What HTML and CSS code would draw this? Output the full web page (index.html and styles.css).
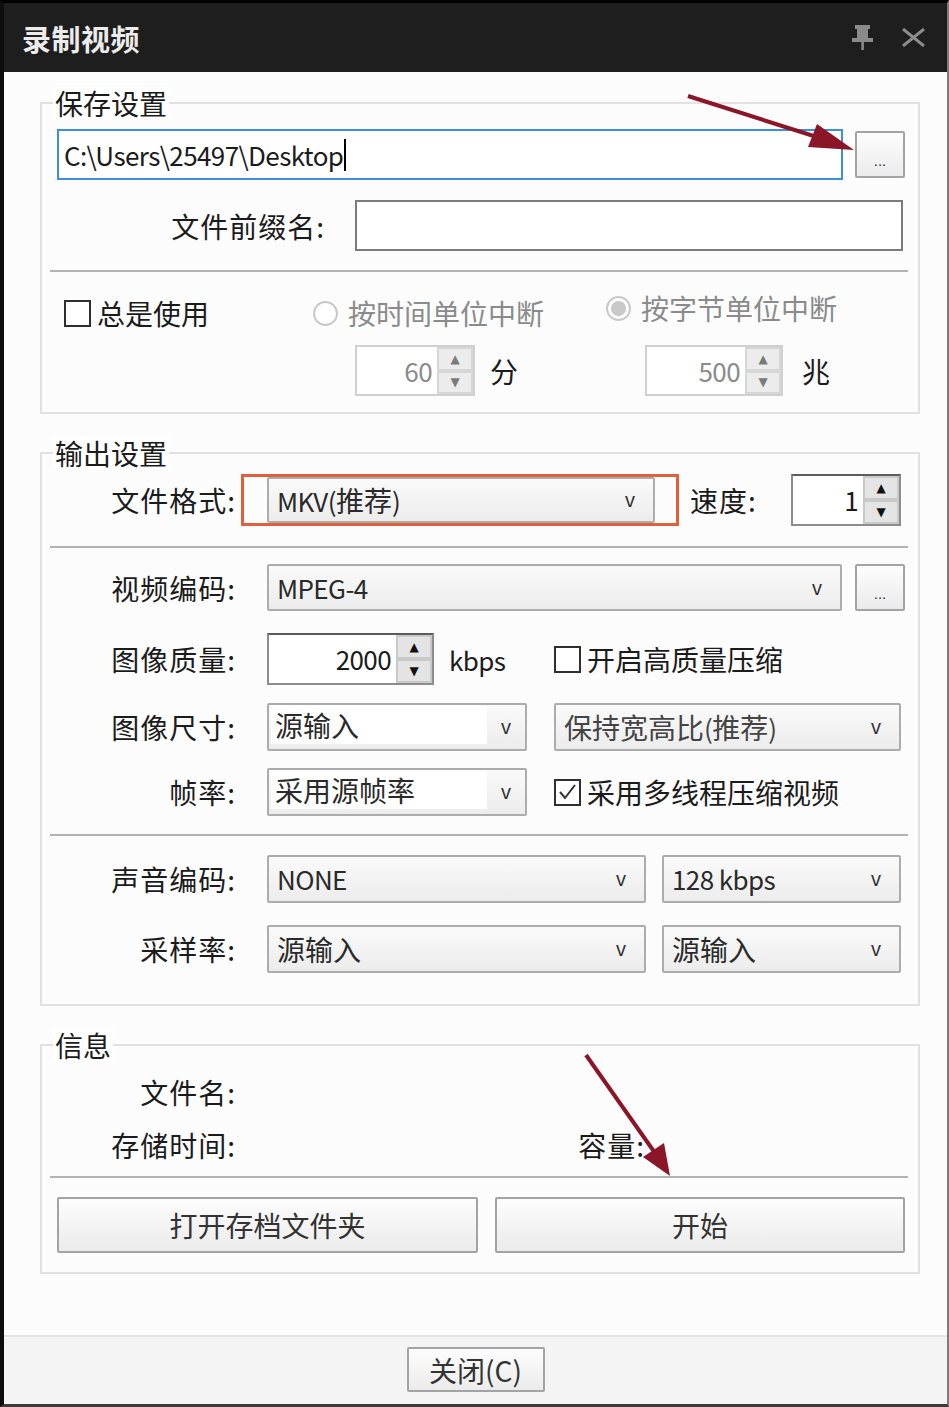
FILE: index.html
```html
<!DOCTYPE html>
<html lang="zh-CN">
<head>
    <meta charset="UTF-8">
    <title>录制视频</title>
    <link rel="stylesheet" href="styles.css">
</head>
<body>
    <div class="window">
        <div class="titlebar">
            <span class="title">录制视频</span>
            <span class="title-icons">
                <svg class="pin" width="21" height="25" viewBox="0 0 21 25">
                    <rect x="3" y="0" width="15" height="4"/>
                    <rect x="5" y="4" width="11" height="9"/>
                    <rect x="0" y="13" width="21" height="4"/>
                    <rect x="9.3" y="17" width="2.6" height="8"/>
                </svg>
                <svg class="close" width="23" height="19" viewBox="0 0 23 19">
                    <path d="M1 1 L22 18 M22 1 L1 18"/>
                </svg>
            </span>
        </div>

        <div class="content">
            <!-- save settings -->
            <fieldset class="group group-save">
                <legend>保存设置</legend>
                <div class="row row-path">
                    <div class="textbox path"><span class="latin">C:\Users\25497\Desktop</span><span class="caret"></span></div>
                    <button class="btn btn-more">...</button>
                </div>
                <div class="row row-prefix">
                    <span class="label label-prefix">文件前缀名:</span>
                    <div class="textbox prefix"></div>
                </div>
                <div class="sep"></div>
                <div class="split-grid">
                    <label class="check"><span class="box"></span>总是使用</label>
                    <label class="radio disabled by-time"><span class="dot"></span>按时间单位中断</label>
                    <label class="radio disabled checked by-size"><span class="dot"></span>按字节单位中断</label>
                    <span></span>
                    <div class="spin-cell minutes">
                        <div class="spin disabled">
                            <span class="value latin">60</span>
                            <span class="arrows"><span>▲</span><span>▼</span></span>
                        </div>
                        <span class="unit">分</span>
                    </div>
                    <div class="spin-cell megas">
                        <div class="spin disabled">
                            <span class="value latin">500</span>
                            <span class="arrows"><span>▲</span><span>▼</span></span>
                        </div>
                        <span class="unit">兆</span>
                    </div>
                </div>
            </fieldset>

            <!-- output settings -->
            <fieldset class="group group-output">
                <legend>输出设置</legend>
                <div class="row row-format">
                    <span class="label">文件格式:</span>
                    <div class="red-mark">
                        <div class="combo format"><span><span class="latin">MKV(</span>推荐<span class="latin">)</span></span><span class="arrow">v</span></div>
                    </div>
                    <span class="label speed-label">速度:</span>
                    <div class="spin speed">
                        <span class="value latin">1</span>
                        <span class="arrows"><span>▲</span><span>▼</span></span>
                    </div>
                </div>
                <div class="sep"></div>
                <div class="row row-vcodec">
                    <span class="label">视频编码:</span>
                    <div class="combo vcodec"><span class="latin">MPEG-4</span><span class="arrow">v</span></div>
                    <button class="btn btn-more">...</button>
                </div>
                <div class="row row-quality">
                    <span class="label">图像质量:</span>
                    <div class="spin-cell quality">
                        <div class="spin bitrate">
                            <span class="value latin">2000</span>
                            <span class="arrows"><span>▲</span><span>▼</span></span>
                        </div>
                        <span class="unit latin">kbps</span>
                    </div>
                    <label class="check"><span class="box"></span>开启高质量压缩</label>
                </div>
                <div class="row row-size">
                    <span class="label">图像尺寸:</span>
                    <div class="combo narrow"><span class="editable">源输入</span><span class="arrow">v</span></div>
                    <div class="combo aspect"><span>保持宽高比<span class="latin">(</span>推荐<span class="latin">)</span></span><span class="arrow">v</span></div>
                </div>
                <div class="row row-fps">
                    <span class="label">帧率:</span>
                    <div class="combo narrow"><span class="editable">采用源帧率</span><span class="arrow">v</span></div>
                    <label class="check checked">
                        <span class="box">
                            <svg width="23" height="23" viewBox="0 0 23 23"><path d="M4 11 L9 17 L19 4"/></svg>
                        </span>采用多线程压缩视频
                    </label>
                </div>
                <div class="sep"></div>
                <div class="row row-acodec">
                    <span class="label">声音编码:</span>
                    <div class="combo audio-left"><span class="latin">NONE</span><span class="arrow">v</span></div>
                    <div class="combo audio-right"><span class="latin">128 kbps</span><span class="arrow">v</span></div>
                </div>
                <div class="row row-rate">
                    <span class="label">采样率:</span>
                    <div class="combo audio-left">源输入<span class="arrow">v</span></div>
                    <div class="combo audio-right">源输入<span class="arrow">v</span></div>
                </div>
            </fieldset>

            <!-- info -->
            <fieldset class="group group-info">
                <legend>信息</legend>
                <div class="row row-info">
                    <span class="label">文件名:</span>
                </div>
                <div class="row row-info">
                    <span class="label">存储时间:</span>
                    <span class="label size-label">容量:</span>
                </div>
                <div class="sep"></div>
                <div class="row row-actions">
                    <button class="btn btn-open">打开存档文件夹</button>
                    <button class="btn btn-start">开始</button>
                </div>
            </fieldset>
        </div>

        <div class="footer">
            <button class="btn btn-close">关闭(C)</button>
        </div>
    </div>

    <svg class="marks" width="949" height="1407" viewBox="0 0 949 1407">
        <line x1="688" y1="96" x2="820" y2="138"/>
        <polygon points="854,150 808,147 817,124"/>
        <line x1="586" y1="1055" x2="655" y2="1153"/>
        <polygon points="670,1176 643,1157 664,1143"/>
    </svg>
</body>
</html>
```

FILE: styles.css
```css
* {
    box-sizing: border-box;
}

body {
    margin: 0;
    position: relative;
    background: #000;
    font-family: "Noto Sans CJK SC", "Noto Sans", sans-serif;
    font-size: 28px;
    color: #1b1b1b;
}

.latin {
    font-size: 26px;
    letter-spacing: -0.6px;
}

.window {
    width: 949px;
    height: 1407px;
    display: flex;
    flex-direction: column;
    background: #fcfcfc;
    border-left: 4px solid #0d0d0d;
    border-top: 3px solid #000;
    border-right: 2px solid #7c7c7c;
    border-bottom: 3px solid #3c3c3c;
}

/* title bar */
.titlebar {
    flex: none;
    height: 69px;
    display: flex;
    align-items: center;
    justify-content: space-between;
    padding: 0 22px 0 18px;
    background: #1e1e1e;
}

.title {
    color: #ececec;
    font-weight: bold;
    font-size: 29px;
    letter-spacing: 0.5px;
    line-height: 32px;
}

.title-icons {
    display: flex;
    align-items: center;
    gap: 29px;
}

.pin {
    fill: #8a8a8a;
}

.close path {
    stroke: #8c8c8c;
    stroke-width: 3;
    fill: none;
}

/* main area */
.content {
    flex: 1;
    padding: 0 27px 0 36px;
}

.group {
    margin: 15px 0 0;
    padding: 0;
    min-width: 0;
    border: 2px solid #e1e1e1;
}

.group legend {
    margin-left: 11px;
    padding: 0 2px;
    line-height: 32px;
    background: #fff;
}

.group-output {
    margin-top: 23px;
    padding-bottom: 31px;
}

.group-info {
    margin-top: 23px;
    padding-bottom: 19px;
}

.row {
    display: flex;
    align-items: center;
    padding-left: 15px;
}

.label {
    flex: none;
    width: 179px;
    text-align: right;
    line-height: 40px;
    letter-spacing: 1px;
}

.sep {
    height: 2px;
    background: #b3b3b3;
    margin: 18px 10px 0 8px;
}

/* text boxes */
.textbox {
    display: flex;
    align-items: center;
    background: #fff;
}

.textbox.path {
    width: 786px;
    height: 51px;
    padding-left: 5px;
    border: 2px solid #3b8fdc;
}

.caret {
    display: inline-block;
    width: 2px;
    height: 32px;
    margin-left: 1px;
    background: #000;
}

.textbox.prefix {
    width: 548px;
    height: 51px;
    margin-left: 30px;
    border: 2px solid #7b7b7b;
}

.row-path {
    margin-top: 10px;
}

.row-prefix {
    margin-top: 20px;
}

.label-prefix {
    width: 268px;
}

.group-save .sep {
    margin-top: 19px;
}

/* buttons */
.btn {
    font-family: inherit;
    font-size: 28px;
    color: #333;
    padding: 0;
    border: 2px solid #a3a3a3;
    border-radius: 2px;
    background: linear-gradient(#fdfdfd, #ebebeb);
}

.btn-more {
    width: 50px;
    height: 47px;
    margin-left: 12px;
    font-size: 15px;
    padding-top: 12px;
    font-family: "Liberation Sans", sans-serif;
}

/* check and radio */
.check,
.radio {
    display: flex;
    align-items: center;
    line-height: 32px;
}

.check {
    gap: 6px;
}

.check .box {
    flex: none;
    width: 27px;
    height: 27px;
    border: 2px solid #2f2f2f;
    background: #fff;
}

.check .box svg {
    display: block;
}

.check .box path {
    fill: none;
    stroke: #333;
    stroke-width: 2;
}

.radio {
    gap: 10px;
}

.radio .dot {
    flex: none;
    width: 25px;
    height: 25px;
    border-radius: 50%;
    border: 2px solid #c8c8c8;
    background: #fff;
}

.radio.checked .dot {
    background: radial-gradient(circle, #c9c9c9 0 7px, #fff 8px);
}

.disabled {
    color: #8b8b8b;
}

/* interval options */
.split-grid {
    display: grid;
    grid-template-columns: 233px 316px 1fr;
    grid-template-rows: 32px 51px;
    row-gap: 16px;
    align-items: center;
    margin-top: 25px;
    padding: 0 0 16px 15px;
}

.split-grid > .check {
    margin-left: 7px;
}

.by-time {
    margin-left: 23px;
}

.by-size {
    margin-top: -10px;
}

.spin-cell {
    display: flex;
    align-items: center;
}

.minutes {
    margin-left: 65px;
}

.minutes .spin {
    width: 120px;
}

.minutes .unit {
    margin-left: 15px;
}

.megas {
    margin-left: 39px;
}

.megas .spin {
    width: 138px;
}

.megas .unit {
    margin-left: 19px;
}

/* spin boxes */
.spin {
    display: flex;
    height: 52px;
    background: #fff;
    border: 2px solid #8d8d8d;
    border-top-color: #5c5c5c;
}

.spin .value {
    flex: 1;
    align-self: center;
    text-align: right;
    padding-right: 5px;
    line-height: 36px;
}

.spin .arrows {
    flex: none;
    width: 36px;
    display: flex;
    flex-direction: column;
}

.spin .arrows span {
    flex: 1;
    display: flex;
    align-items: center;
    justify-content: center;
    background: #e4e4e4;
    border: 2px solid #c9c9c9;
    font-family: "DejaVu Sans", sans-serif;
    font-size: 12px;
    color: #111;
}

.spin.disabled {
    height: 51px;
    border-color: #d0d0d0;
}

.spin.disabled .arrows span {
    background: #ececec;
    border-color: #d6d6d6;
    color: #7a7a7a;
}

/* combo boxes */
.combo {
    flex: none;
    display: flex;
    align-items: center;
    justify-content: space-between;
    height: 48px;
    margin-left: 31px;
    padding: 0 18px 0 8px;
    border: 2px solid #acacac;
    border-radius: 2px;
    background: linear-gradient(#fafafa, #ececec);
    color: #2a2a2a;
    line-height: 36px;
}

.combo .arrow {
    flex: none;
    font-family: "Liberation Sans", sans-serif;
    font-size: 20px;
    color: #333;
}

.combo.narrow {
    width: 260px;
    padding: 0 0 0 2px;
}

.combo .editable {
    flex: 1;
    align-self: stretch;
    display: flex;
    align-items: center;
    margin: 1px 0 5px;
    padding-left: 4px;
    background: #fff;
}

.combo.narrow .arrow {
    width: 38px;
    text-align: center;
}

/* output group rows */
.row-format {
    margin-top: 3px;
    height: 56px;
}

.red-mark {
    margin-left: 5px;
    padding: 0 21px 0 23px;
    border: 3px solid #e0603e;
}

.combo.format {
    width: 388px;
    height: 46px;
    margin-left: 0;
}

.speed-label {
    width: 70px;
    margin-left: 11px;
    text-align: left;
}

.spin.speed {
    width: 110px;
    margin-left: 31px;
}

.row-vcodec {
    margin-top: 16px;
}

.combo.vcodec {
    width: 575px;
    height: 47px;
}

.row-vcodec .btn-more {
    margin-left: 13px;
}

.row-quality {
    margin-top: 22px;
}

.spin-cell.quality {
    width: 260px;
    margin-left: 31px;
}

.spin.bitrate {
    width: 167px;
}

.quality .unit {
    margin-left: 15px;
}

.row-quality .check,
.row-fps .check {
    margin-left: 27px;
}

.row-size {
    margin-top: 18px;
}

.row-fps {
    margin-top: 17px;
}

.combo.aspect {
    width: 347px;
    margin-left: 27px;
    color: #444;
}

.row-acodec {
    margin-top: 19px;
}

.row-rate {
    margin-top: 22px;
}

.combo.audio-left {
    width: 379px;
}

.combo.audio-right {
    width: 239px;
    margin-left: 16px;
}

/* info group */
.row-info {
    height: 44px;
    margin-top: 9px;
}

.size-label {
    width: 80px;
    margin-left: 329px;
}

.group-info .sep {
    margin-top: 9px;
}

.row-actions {
    margin-top: 19px;
}

.btn-open {
    width: 421px;
    height: 56px;
}

.btn-start {
    width: 410px;
    height: 56px;
    margin-left: 17px;
}

/* footer */
.footer {
    flex: none;
    height: 69px;
    display: flex;
    justify-content: center;
    padding-top: 10px;
    background: #f4f4f4;
    border-top: 2px solid #e4e4e4;
}

.btn-close {
    width: 138px;
    height: 45px;
}

/* red annotation arrows */
.marks {
    position: absolute;
    left: 0;
    top: 0;
    pointer-events: none;
}

.marks line {
    stroke: #8b1628;
    stroke-width: 4;
}

.marks polygon {
    fill: #8b1628;
}
```
